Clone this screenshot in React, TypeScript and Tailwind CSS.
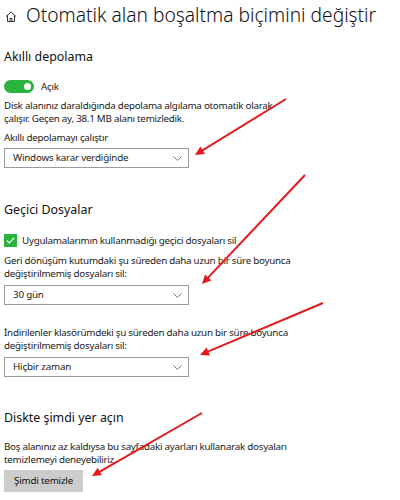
import React from "react";

function Chevron() {
  return (
    <svg width="9" height="5" viewBox="0 0 9 5" className="shrink-0">
      <path d="M0.5 0.5 L4.5 4.5 L8.5 0.5" fill="none" stroke="#777" strokeWidth="1" />
    </svg>
  );
}

function Select({ value }: { value: string }) {
  return (
    <div className="w-[185px] h-[20px] border-[1.5px] border-[#9a9a9a] flex items-center justify-between pl-[8px] pr-[6px] text-[9.8px] tracking-[-0.2px] text-[#222]">
      <span>{value}</span>
      <Chevron />
    </div>
  );
}

function Arrow({ x1, y1, x2, y2 }: { x1: number; y1: number; x2: number; y2: number }) {
  const a = Math.atan2(y2 - y1, x2 - x1);
  const L = 10, w = 0.45;
  const p1 = [x2 - L * Math.cos(a - w), y2 - L * Math.sin(a - w)];
  const p2 = [x2 - L * Math.cos(a + w), y2 - L * Math.sin(a + w)];
  return (
    <g>
      <line x1={x1} y1={y1} x2={x2 - 4 * Math.cos(a)} y2={y2 - 4 * Math.sin(a)} stroke="#e3191b" strokeWidth="2" />
      <polygon points={`${x2},${y2} ${p1[0]},${p1[1]} ${p2[0]},${p2[1]}`} fill="#e3191b" />
    </g>
  );
}

const body = "text-[9.8px] tracking-[-0.25px] leading-[13px] whitespace-nowrap";
const heading = "h-[20px] leading-[20px] text-[12.4px] text-[#111]";

export default function App() {
  return (
    <div className="relative w-[400px] h-[500px] overflow-hidden bg-white pl-[4px] font-['Noto_Sans',sans-serif] text-[#1a1a1a]">
      <div className="h-[30px] flex items-center gap-[9px]">
        <svg width="12" height="11" viewBox="0 0 12 11" className="ml-[1px] mt-[3px]">
          <path d="M1 5.5 L6 1 L11 5.5 M2.5 4.3 V10.5 H9.5 V4.3 M5 10.5 V7.5 H7 V10.5" fill="none" stroke="#333" strokeWidth="1" />
        </svg>
        <h1 className="text-[19.2px] font-light text-[#111]">Otomatik alan boşaltma biçimini değiştir</h1>
      </div>

      <h2 className={`mt-[17px] ${heading}`}>Akıllı depolama</h2>
      <div className="mt-[12px] h-[14px] flex items-center gap-[7px]">
        <div className="w-[30px] h-[13px] rounded-full bg-[#2ab43e] flex items-center justify-end pr-[3px]">
          <div className="w-[7px] h-[7px] rounded-full bg-white" />
        </div>
        <span className={body}>Açık</span>
      </div>
      <p className={`mt-[6px] ${body}`}>
        Disk alanınız daraldığında depolama algılama otomatik olarak
        <br />
        çalışır. Geçen ay, 38.1 MB alanı temizledik.
      </p>
      <p className={`mt-[6px] ${body}`}>Akıllı depolamayı çalıştır</p>
      <div className="mt-[4px]">
        <Select value="Windows karar verdiğinde" />
      </div>

      <h2 className={`mt-[32px] ${heading}`}>Geçici Dosyalar</h2>
      <div className="mt-[14px] h-[13px] flex items-center gap-[5px]">
        <div className="w-[13px] h-[13px] bg-[#2ab43e] flex items-center justify-center">
          <svg width="9" height="7" viewBox="0 0 9 7">
            <path d="M0.8 3.6 L3.2 6 L8.2 0.8" fill="none" stroke="white" strokeWidth="1.2" />
          </svg>
        </div>
        <span className={body}>Uygulamalarımın kullanmadığı geçici dosyaları sil</span>
      </div>
      <p className={`mt-[7px] ${body}`}>
        Geri dönüşüm kutumdaki şu süreden daha uzun bir süre boyunca
        <br />
        değiştirilmemiş dosyaları sil:
      </p>
      <div className="mt-[5px]">
        <Select value="30 gün" />
      </div>
      <p className={`mt-[21px] ${body}`}>
        İndirilenler klasörümdeki şu süreden daha uzun bir süre boyunca
        <br />
        değiştirilmemiş dosyaları sil:
      </p>
      <div className="mt-[5px]">
        <Select value="Hiçbir zaman" />
      </div>

      <h2 className={`mt-[31px] ${heading}`}>Diskte şimdi yer açın</h2>
      <p className={`mt-[12px] ${body}`}>
        Boş alanınız az kaldıysa bu sayfadaki ayarları kullanarak dosyaları
        <br />
        temizlemeyi deneyebiliriz.
      </p>
      <button className="mt-[4px] w-[79px] h-[22px] bg-[#cccccc] text-[9.8px] tracking-[-0.2px] text-[#111]">Şimdi temizle</button>

      <svg className="absolute inset-0 pointer-events-none" width="400" height="500">
        <Arrow x1={286} y1={99} x2={195} y2={155} />
        <Arrow x1={305} y1={175} x2={202} y2={284} />
        <Arrow x1={323} y1={303} x2={200} y2={355} />
        <Arrow x1={202} y1={413} x2={92} y2={476} />
      </svg>
    </div>
  );
}
